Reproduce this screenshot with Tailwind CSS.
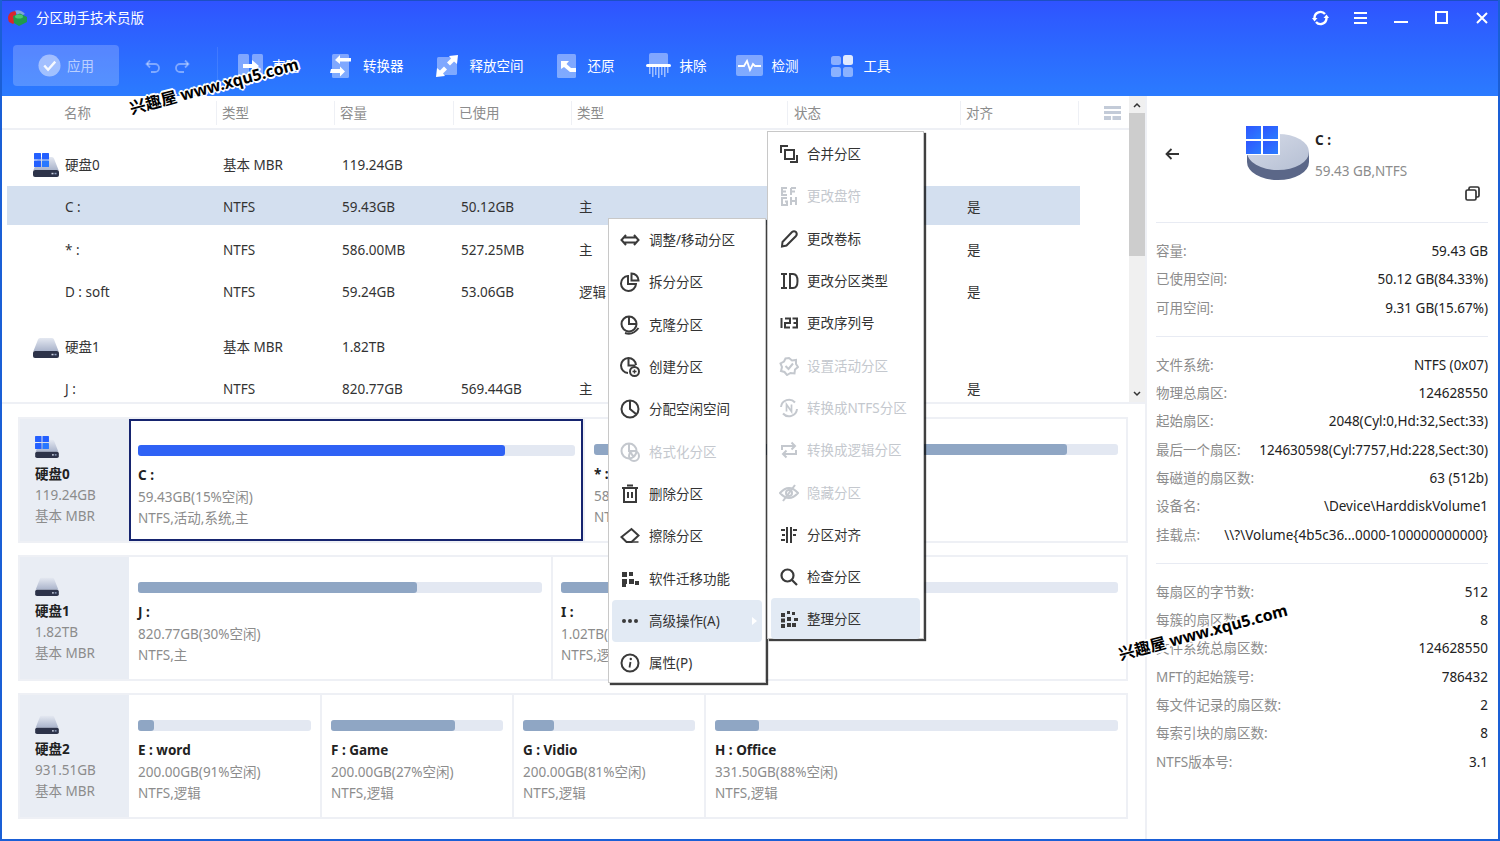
<!DOCTYPE html>
<html lang="zh-CN">
<head>
<meta charset="utf-8">
<title>分区助手技术员版</title>
<script src="https://cdn.jsdelivr.net/npm/@tailwindcss/browser@4"></script>
</head>
<body class="m-0 overflow-hidden bg-white">
<svg class="absolute w-0 h-0" aria-hidden="true">
  <defs>
    <linearGradient id="dt" x1="0" y1="0" x2="0" y2="1"><stop offset="0" stop-color="#e4e8f1"/><stop offset="1" stop-color="#aab4cb"/></linearGradient>
    <linearGradient id="pie" x1="0" y1="0" x2="1" y2="1"><stop offset="0" stop-color="#d6dbe8"/><stop offset="1" stop-color="#b5bfd3"/></linearGradient>
    <linearGradient id="win" x1="0" y1="0" x2="1" y2="1"><stop offset="0" stop-color="#2f55ff"/><stop offset="1" stop-color="#2a7dff"/></linearGradient>
    <symbol id="disk" viewBox="0 0 26 22">
      <path d="M5 3.5 Q5.500 2 7 2 L19 2 Q20.500 2 21 3.500 L25.500 15 L.5 15 Z" fill="url(#dt)"/>
      <path d="M2 15 L24 15 Q26 15 26 17 L26 20 Q26 22 24 22 L2 22 Q0 22 0 20 L0 17 Q0 15 2 15 Z" fill="#2d3349"/>
      <rect x="18.500" y="17.800" width="2" height="1.500" fill="#cfd6e6"/><rect x="21.500" y="17.800" width="2" height="1.500" fill="#8fa0c0"/>
    </symbol>
    <symbol id="wins" viewBox="0 0 15 14">
      <rect x="0" y="0" width="7" height="6.500" rx=".6" fill="#2460ff"/><rect x="8" y="0" width="7" height="6.500" rx=".6" fill="#2460ff"/>
      <rect x="0" y="7.500" width="7" height="6.500" rx=".6" fill="#2460ff"/><rect x="8" y="7.500" width="7" height="6.500" rx=".6" fill="#2878ff"/>
    </symbol>
  </defs>
</svg>

<div class="relative w-[1500px] h-[841px] flex flex-col overflow-hidden border-x-2 border-b-2 border-[#1a5fd6] font-['Noto_Sans','Noto_Sans_CJK_SC',sans-serif] text-[13.5px] leading-5 text-[#333] box-border">

  <!-- Header -->
  <header class="h-[96px] shrink-0 bg-linear-to-b from-[#2f53ff] to-[#2b7bff] text-white flex flex-col border-t border-[#1c4fc4] -mx-[2px] px-[2px]">
    <div class="h-[33px] flex items-center justify-between pl-[5px] pr-[10px]">
      <div class="flex items-center gap-[8px]">
        <svg width="21" height="18" viewBox="0 0 21 18">
          <path d="M1 8 Q2 2 9 2 L9 8 L11 11 L6 15 L2 13 Q1 11 1 8 Z" fill="#d8262c"/>
          <path d="M8 1.500 Q14 0 18 5 L11 8 Z" fill="#7ea5d8"/>
          <path d="M6 7 L13 4.500 L20 8 L20 13 L12 17 L7 14 Z" fill="#1f9a4d"/>
          <ellipse cx="12" cy="7.500" rx="4" ry="2" fill="#49c66f"/>
        </svg>
        <span>分区助手技术员版</span>
      </div>
      <div class="flex items-center gap-[24px]">
        <svg width="19" height="16" viewBox="0 0 19 16" fill="none" stroke="#fff" stroke-width="2.400"><path d="M3.500 8 A6 6 0 0 1 14 4"/><path d="M15.500 8 A6 6 0 0 1 5 12"/><path d="M1 7 L6.500 7 L3.500 10.500 Z" fill="#fff" stroke="none" transform="translate(0 1)"/><path d="M12.500 8 L18 8 L15.500 4.500 Z" fill="#fff" stroke="none"/></svg>
        <svg width="13" height="12" viewBox="0 0 13 12" fill="#fff"><rect width="13" height="2"/><rect y="5" width="13" height="2"/><rect y="10" width="13" height="2"/></svg>
        <svg width="14" height="12" viewBox="0 0 14 12" fill="#fff" class="ml-[3px]"><rect y="9" width="14" height="2"/></svg>
        <svg width="13" height="13" viewBox="0 0 13 13" fill="none" stroke="#fff" stroke-width="2" class="ml-[3px]"><rect x="1" y="1" width="11" height="11"/></svg>
        <svg width="12" height="12" viewBox="0 0 12 12" fill="none" stroke="#fff" stroke-width="2" class="ml-[4px]"><path d="M1 1 L11 11 M11 1 L1 11"/></svg>
      </div>
    </div>
    <div class="h-[41px] mt-[11px] flex items-center pl-[11px]">
      <button class="w-[106px] h-[41px] rounded-[4px] bg-white/20 flex items-center justify-center gap-[6px] text-white/60">
        <svg width="23" height="23" viewBox="0 0 24 24"><circle cx="12" cy="12" r="11.500" fill="#fff" fill-opacity=".45"/><path d="M6.500 12 L10.500 16.500 L18 8" fill="none" stroke="#fff" stroke-opacity=".9" stroke-width="2.500"/></svg>
        <span>应用</span>
      </button>
      <svg width="16" height="14" viewBox="0 0 16 14" fill="none" stroke="#fff" stroke-opacity=".4" stroke-width="1.800" class="ml-[26px]"><path d="M5 1.500 L1.500 5 L5 8.500"/><path d="M2 5 L10 5 A4 4 0 0 1 10 13 L6 13"/></svg>
      <svg width="16" height="14" viewBox="0 0 16 14" fill="none" stroke="#fff" stroke-opacity=".4" stroke-width="1.800" class="ml-[13px]"><path d="M11 1.500 L14.500 5 L11 8.500"/><path d="M14 5 L6 5 A4 4 0 0 0 6 13 L10 13"/></svg>
      <div class="w-px h-[38px] bg-white/10 ml-[27px]"></div>

      <div class="flex items-center gap-[9px] ml-[20px]">
        <svg width="25" height="24" viewBox="0 0 25 24"><rect x="0" y="0" width="11" height="24" rx="1.500" fill="#fff" fill-opacity=".4"/><rect x="14" y="0" width="11" height="24" rx="1.500" fill="#fff" fill-opacity=".4"/><path d="M5 10 L14 10 L14 6 L21 12 L14 18 L14 14 L5 14 Z" fill="#fff"/></svg>
        <span class="w-[56px] text-white">克隆</span>
      </div>
      <div class="flex items-center gap-[11px] ml-[2px]">
        <svg width="22" height="24" viewBox="0 0 22 24"><rect x="2" y="0" width="17" height="24" rx="1.500" fill="#fff" fill-opacity=".4"/><path d="M19 4 L10 4 L10 1 L5 6 L10 10 L10 7.500 L21 7.500 L21 4 Z" fill="#fff"/><path d="M1 15 L10 15 L10 12.500 L15 17.500 L10 22.500 L10 19 L0 19 Z" fill="#fff"/></svg>
        <span class="text-white">转换器</span>
      </div>
      <div class="flex items-center gap-[11px] ml-[31px]">
        <svg width="24" height="22" viewBox="0 0 24 22"><rect x="2" y="2" width="20" height="18" rx="1.500" fill="#fff" fill-opacity=".4"/><path d="M14 1 L23 0 L22 9 L19 6.500 L15 10.500 L12 7.500 L16 3.500 Z" fill="#fff"/><path d="M10 21 L1 22 L2 13 L5 15.500 L9 11.500 L12 14.500 L8 18.500 Z" fill="#fff"/></svg>
        <span class="text-white">释放空间</span>
      </div>
      <div class="flex items-center gap-[9px] ml-[33px]">
        <svg width="22" height="24" viewBox="0 0 22 24"><rect x="0" y="0" width="19" height="24" rx="1.500" fill="#fff" fill-opacity=".4"/><path d="M4 7 L12 7 L9.500 10 L14 14 L19 14 L19 18 L13 18 L7 13 L4 15 Z" fill="#fff"/></svg>
        <span class="text-white">还原</span>
      </div>
      <div class="flex items-center gap-[9px] ml-[31px]">
        <svg width="25" height="25" viewBox="0 0 25 25"><path d="M3 11 L3 2 Q3 0 5 0 L20 0 Q22 0 22 2 L22 11 Z" fill="#fff" fill-opacity=".4"/><rect x="0" y="11" width="25" height="3" rx="1.500" fill="#fff"/><g fill="#fff" fill-opacity=".55"><rect x="3" y="14" width="1.500" height="7"/><rect x="6" y="14" width="1.500" height="10"/><rect x="9" y="14" width="1.500" height="8"/><rect x="12" y="14" width="1.500" height="11"/><rect x="15" y="14" width="1.500" height="8"/><rect x="18" y="14" width="1.500" height="10"/><rect x="21" y="14" width="1.500" height="6"/></g></svg>
        <span class="text-white">抹除</span>
      </div>
      <div class="flex items-center gap-[9px] ml-[29px]">
        <svg width="27" height="21" viewBox="0 0 27 21"><rect width="27" height="21" rx="2" fill="#fff" fill-opacity=".4"/><path d="M2 11 L8 11 L11 6 L14 15 L17 9 L19 11 L25 11" fill="none" stroke="#fff" stroke-width="1.800"/></svg>
        <span class="text-white">检测</span>
      </div>
      <div class="flex items-center gap-[11px] ml-[32px]">
        <svg width="22" height="22" viewBox="0 0 22 22"><rect x="0" y="1" width="10" height="9" rx="2.500" fill="#fff" fill-opacity=".45"/><rect x="12" y="0" width="10" height="10" rx="2.500" fill="#fff" fill-opacity=".85"/><rect x="0" y="12" width="10" height="10" rx="2.500" fill="#fff" fill-opacity=".45"/><rect x="12" y="12" width="10" height="10" rx="2.500" fill="#fff" fill-opacity=".45"/></svg>
        <span class="text-white">工具</span>
      </div>
    </div>
  </header>

  <!-- Body -->
  <div class="flex-1 flex min-h-0">
    <main class="w-[1143px] shrink-0 flex flex-col">
      <!-- Table + scrollbar -->
      <div class="h-[308px] flex border-b-2 border-[#eef0f5]">
        <div class="w-[1127px] shrink-0 flex flex-col">
          <div class="h-[33px] shrink-0 grid grid-cols-[214px_118px_119px_118px_216px_173px_118px_1fr] items-center border-b-2 border-[#eef0f5] text-[#8c8c8c] mt-px">
            <div class="pl-[62px]">名称</div>
            <div class="pl-[5px] border-l border-[#eef0f5] h-[24px] flex items-center">类型</div>
            <div class="pl-[5px] border-l border-[#eef0f5] h-[24px] flex items-center">容量</div>
            <div class="pl-[5px] border-l border-[#eef0f5] h-[24px] flex items-center">已使用</div>
            <div class="pl-[5px] border-l border-[#eef0f5] h-[24px] flex items-center">类型</div>
            <div class="pl-[6px] border-l border-[#eef0f5] h-[24px] flex items-center">状态</div>
            <div class="pl-[5px] border-l border-[#eef0f5] h-[24px] flex items-center">对齐</div>
            <div class="border-l border-[#eef0f5] h-[24px] flex items-center justify-end pr-[8px]">
              <svg width="17" height="14" viewBox="0 0 17 14" fill="#c3cbd8"><rect width="17" height="3"/><rect y="5" width="17" height="3"/><rect y="10" width="7" height="4"/><rect x="8.500" y="10" width="8.500" height="4"/></svg>
            </div>
          </div>
          <div class="pt-[14px] pl-[5px] w-[1078px]">
            <div class="h-[39px] mb-[3px] grid grid-cols-[216px_119px_119px_118px_215px_173px_1fr] items-center translate-y-px">
              <div class="flex items-center pl-[26px] gap-[6px]"><span class="relative block w-[26px] h-[22px]"><svg class="absolute left-0 top-[1px] w-[26px] h-[22px]"><use href="#disk"/></svg><svg class="absolute left-[1px] -top-[1px] w-[15px] h-[14px]"><use href="#wins"/></svg></span>硬盘0</div>
              <div>基本 MBR</div><div>119.24GB</div><div></div><div></div><div></div><div></div>
            </div>
            <div class="h-[39px] mb-[4.300px] pt-[2px] grid grid-cols-[216px_119px_119px_118px_215px_173px_1fr] items-center bg-[#d3dfef]">
              <div class="pl-[58px]">C :</div><div>NTFS</div><div>59.43GB</div><div>50.12GB</div><div>主</div><div></div><div>是</div>
            </div>
            <div class="h-[39px] mb-[3.300px] pt-[2px] grid grid-cols-[216px_119px_119px_118px_215px_173px_1fr] items-center">
              <div class="pl-[58px]">* :</div><div>NTFS</div><div>586.00MB</div><div>527.25MB</div><div>主</div><div></div><div>是</div>
            </div>
            <div class="h-[39px] mb-[16px] pt-[2px] grid grid-cols-[216px_119px_119px_118px_215px_173px_1fr] items-center">
              <div class="pl-[58px]">D : soft</div><div>NTFS</div><div>59.24GB</div><div>53.06GB</div><div>逻辑</div><div></div><div>是</div>
            </div>
            <div class="h-[39px] mb-[3px] pt-[2px] grid grid-cols-[216px_119px_119px_118px_215px_173px_1fr] items-center">
              <div class="flex items-center pl-[26px] gap-[6px]"><svg class="w-[26px] h-[22px]"><use href="#disk"/></svg>硬盘1</div>
              <div>基本 MBR</div><div>1.82TB</div><div></div><div></div><div></div><div></div>
            </div>
            <div class="h-[39px] pt-[2px] grid grid-cols-[216px_119px_119px_118px_215px_173px_1fr] items-center">
              <div class="pl-[58px]">J :</div><div>NTFS</div><div>820.77GB</div><div>569.44GB</div><div>主</div><div></div><div>是</div>
            </div>
          </div>
        </div>
        <div class="w-[16px] shrink-0 bg-[#f0f0f0] flex flex-col items-center">
          <svg class="mt-[6px] mb-[5px] shrink-0" width="8" height="6" viewBox="0 0 8 6" fill="none" stroke="#333" stroke-width="1.500"><path d="M1 5 L4 2 L7 5"/></svg>
          <div class="w-full h-[143px] bg-[#cdcdcd]"></div>
          <svg class="mt-auto mb-[5px]" width="8" height="6" viewBox="0 0 8 6" fill="none" stroke="#333" stroke-width="1.500"><path d="M1 1 L4 4 L7 1"/></svg>
        </div>
      </div>

      <!-- Disk panels -->
      <div class="pl-[16px] pr-[17px] pt-[13px] flex flex-col gap-[12px]">
        <section class="h-[126px] flex border-2 border-[#eef0f5] bg-[#eef0f5] gap-[2px]">
          <div class="w-[109px] shrink-0 bg-[#e9edf4] pl-[15px] pt-[18px] text-[#8c8c8c] leading-[21px]">
            <span class="relative block w-[26px] h-[22px]"><svg class="absolute left-0 top-[1px] w-[24px] h-[20px]"><use href="#disk"/></svg><svg class="absolute left-0 -top-[1px] w-[14px] h-[13px]"><use href="#wins"/></svg></span>
            <div class="font-bold text-[#222] mt-[5px]">硬盘0</div><div>119.24GB</div><div>基本 MBR</div>
          </div>
          <div class="w-[454px] shrink-0 bg-white border-2 border-[#16246f] -ml-[2px] pl-[7px] pr-[6px] pt-[24px] text-[#8c8c8c] leading-[21.500px]">
            <div class="h-[11px] rounded-[3px] bg-[#e3e8f2] mb-[9px]"><div class="h-full w-[84%] rounded-[3px] bg-[#2f62f5]"></div></div>
            <div class="font-bold text-[#222]">C :</div><div>59.43GB(15%空闲)</div><div>NTFS,活动,系统,主</div>
          </div>
          <div class="w-[70px] shrink-0 bg-white pl-[9px] pr-[2px] pt-[25px] text-[#8c8c8c] leading-[21.500px] whitespace-nowrap">
            <div class="h-[11px] rounded-[3px] bg-[#e3e8f2] mb-[9px]"><div class="h-full w-[80%] rounded-[3px] bg-[#8fa6c4]"></div></div>
            <div class="font-bold text-[#222]">* :</div><div>586.00MB</div><div>NTFS</div>
          </div>
          <div class="flex-1 bg-white pl-[9px] pr-[8px] pt-[25px] text-[#8c8c8c] leading-[21.500px]">
            <div class="h-[11px] rounded-[3px] bg-[#e3e8f2] mb-[9px]"><div class="h-full w-[88.700%] rounded-[3px] bg-[#8fa6c4]"></div></div>
          </div>
        </section>
        <section class="h-[126px] flex border-2 border-[#eef0f5] bg-[#eef0f5] gap-[2px]">
          <div class="w-[109px] shrink-0 bg-[#e9edf4] pl-[15px] pt-[18px] text-[#8c8c8c] leading-[21px]">
            <svg class="block w-[24px] h-[20px] mt-[1px] mb-[1px]"><use href="#disk"/></svg>
            <div class="font-bold text-[#222] mt-[5px]">硬盘1</div><div>1.82TB</div><div>基本 MBR</div>
          </div>
          <div class="w-[422px] -ml-[2px] shrink-0 bg-white pl-[9px] pr-[9px] pt-[25px] text-[#8c8c8c] leading-[21.500px]">
            <div class="h-[11px] rounded-[3px] bg-[#e3e8f2] mb-[9px]"><div class="h-full w-[69%] rounded-[3px] bg-[#8fa6c4]"></div></div>
            <div class="font-bold text-[#222]">J :</div><div>820.77GB(30%空闲)</div><div>NTFS,主</div>
          </div>
          <div class="flex-1 bg-white pl-[8px] pr-[8px] pt-[25px] text-[#8c8c8c] leading-[21.500px] whitespace-nowrap">
            <div class="h-[11px] rounded-[3px] bg-[#e3e8f2] mb-[9px]"><div class="h-full w-[12%] rounded-[3px] bg-[#8fa6c4]"></div></div>
            <div class="font-bold text-[#222]">I :</div><div>1.02TB(50%空闲)</div><div>NTFS,逻辑</div>
          </div>
        </section>
        <section class="h-[126px] flex border-2 border-[#eef0f5] bg-[#eef0f5] gap-[2px]">
          <div class="w-[109px] shrink-0 bg-[#e9edf4] pl-[15px] pt-[18px] text-[#8c8c8c] leading-[21px]">
            <svg class="block w-[24px] h-[20px] mt-[1px] mb-[1px]"><use href="#disk"/></svg>
            <div class="font-bold text-[#222] mt-[5px]">硬盘2</div><div>931.51GB</div><div>基本 MBR</div>
          </div>
          <div class="w-[191px] -ml-[2px] shrink-0 bg-white pl-[9px] pr-[9px] pt-[25px] text-[#8c8c8c] leading-[21.500px]">
            <div class="h-[11px] rounded-[3px] bg-[#e3e8f2] mb-[9px]"><div class="h-full w-[9%] rounded-[3px] bg-[#8fa6c4]"></div></div>
            <div class="font-bold text-[#222]">E : word</div><div>200.00GB(91%空闲)</div><div>NTFS,逻辑</div>
          </div>
          <div class="w-[190px] shrink-0 bg-white pl-[9px] pr-[9px] pt-[25px] text-[#8c8c8c] leading-[21.500px]">
            <div class="h-[11px] rounded-[3px] bg-[#e3e8f2] mb-[9px]"><div class="h-full w-[72%] rounded-[3px] bg-[#8fa6c4]"></div></div>
            <div class="font-bold text-[#222]">F : Game</div><div>200.00GB(27%空闲)</div><div>NTFS,逻辑</div>
          </div>
          <div class="w-[190px] shrink-0 bg-white pl-[9px] pr-[9px] pt-[25px] text-[#8c8c8c] leading-[21.500px]">
            <div class="h-[11px] rounded-[3px] bg-[#e3e8f2] mb-[9px]"><div class="h-full w-[18%] rounded-[3px] bg-[#8fa6c4]"></div></div>
            <div class="font-bold text-[#222]">G : Vidio</div><div>200.00GB(81%空闲)</div><div>NTFS,逻辑</div>
          </div>
          <div class="flex-1 bg-white pl-[9px] pr-[8px] pt-[25px] text-[#8c8c8c] leading-[21.500px]">
            <div class="h-[11px] rounded-[3px] bg-[#e3e8f2] mb-[9px]"><div class="h-full w-[11%] rounded-[3px] bg-[#8fa6c4]"></div></div>
            <div class="font-bold text-[#222]">H : Office</div><div>331.50GB(88%空闲)</div><div>NTFS,逻辑</div>
          </div>
        </section>
      </div>
    </main>

    <!-- Right details panel -->
    <aside class="flex-1 border-l-2 border-[#eef0f5] pl-[9px] pr-[10px] text-[#222]">
      <div class="h-[127px] flex border-b-[1.500px] border-[#e8ebf3] relative">
        <svg class="mt-[52px] ml-[9px] shrink-0" width="14" height="12" viewBox="0 0 14 12" fill="none" stroke="#333" stroke-width="1.800"><path d="M6.500 1 L1.500 6 L6.500 11 M2 6 L14 6"/></svg>
        <svg class="mt-[30px] ml-[67px] shrink-0" width="64" height="56" viewBox="0 0 64 56">
          <ellipse cx="32" cy="36" rx="31" ry="18" fill="#5b6788"/>
          <rect x="1" y="26" width="62" height="10" fill="#5b6788"/>
          <ellipse cx="32" cy="26" rx="31" ry="18" fill="url(#pie)"/>
          <rect x="-1" y="-1" width="35" height="30" fill="#fff"/>
          <rect x="0" y="0" width="15" height="13" fill="url(#win)"/><rect x="17" y="0" width="15" height="13" fill="url(#win)"/>
          <rect x="0" y="15" width="15" height="13" fill="url(#win)"/><rect x="17" y="15" width="15" height="13" fill="url(#win)"/>
        </svg>
        <div class="ml-[5px] mt-[34px] text-[#8c8c8c]">
          <div class="font-bold text-[#222] leading-5">C :</div>
          <div class="mt-[11px]">59.43 GB,NTFS</div>
        </div>
        <svg class="absolute right-[8px] top-[90px]" width="15" height="15" viewBox="0 0 15 15" fill="none" stroke="#333" stroke-width="1.700"><rect x="1" y="4" width="10" height="10" rx="1.500"/><path d="M4 4 L4 2.500 Q4 1 5.500 1 L12.500 1 Q14 1 14 2.500 L14 9.500 Q14 11 12.500 11 L11 11"/></svg>
      </div>
      <dl class="pt-[18px] pb-[18px] border-b-[1.500px] border-[#e8ebf3] flex flex-col gap-[8.330px]">
        <div class="flex justify-between h-5"><dt class="text-[#8c8c8c]">容量:</dt><dd>59.43 GB</dd></div>
        <div class="flex justify-between h-5"><dt class="text-[#8c8c8c]">已使用空间:</dt><dd>50.12 GB(84.33%)</dd></div>
        <div class="flex justify-between h-5"><dt class="text-[#8c8c8c]">可用空间:</dt><dd>9.31 GB(15.67%)</dd></div>
      </dl>
      <dl class="pt-[18px] pb-[18px] border-b-[1.500px] border-[#e8ebf3] flex flex-col gap-[8.330px]">
        <div class="flex justify-between h-5"><dt class="text-[#8c8c8c]">文件系统:</dt><dd>NTFS (0x07)</dd></div>
        <div class="flex justify-between h-5"><dt class="text-[#8c8c8c]">物理总扇区:</dt><dd>124628550</dd></div>
        <div class="flex justify-between h-5"><dt class="text-[#8c8c8c]">起始扇区:</dt><dd>2048(Cyl:0,Hd:32,Sect:33)</dd></div>
        <div class="flex justify-between h-5"><dt class="text-[#8c8c8c]">最后一个扇区:</dt><dd>124630598(Cyl:7757,Hd:228,Sect:30)</dd></div>
        <div class="flex justify-between h-5"><dt class="text-[#8c8c8c]">每磁道的扇区数:</dt><dd>63 (512b)</dd></div>
        <div class="flex justify-between h-5"><dt class="text-[#8c8c8c]">设备名:</dt><dd>\Device\HarddiskVolume1</dd></div>
        <div class="flex justify-between h-5"><dt class="text-[#8c8c8c]">挂载点:</dt><dd>\\?\Volume{4b5c36...0000-100000000000}</dd></div>
      </dl>
      <dl class="pt-[18px] flex flex-col gap-[8.330px]">
        <div class="flex justify-between h-5"><dt class="text-[#8c8c8c]">每扇区的字节数:</dt><dd>512</dd></div>
        <div class="flex justify-between h-5"><dt class="text-[#8c8c8c]">每簇的扇区数:</dt><dd>8</dd></div>
        <div class="flex justify-between h-5"><dt class="text-[#8c8c8c]">文件系统总扇区数:</dt><dd>124628550</dd></div>
        <div class="flex justify-between h-5"><dt class="text-[#8c8c8c]">MFT的起始簇号:</dt><dd>786432</dd></div>
        <div class="flex justify-between h-5"><dt class="text-[#8c8c8c]">每文件记录的扇区数:</dt><dd>2</dd></div>
        <div class="flex justify-between h-5"><dt class="text-[#8c8c8c]">每索引块的扇区数:</dt><dd>8</dd></div>
        <div class="flex justify-between h-5"><dt class="text-[#8c8c8c]">NTFS版本号:</dt><dd>3.1</dd></div>
      </dl>
    </aside>
  </div>

  <!-- Main context menu -->
  <div class="absolute left-[606px] top-[218px] w-[158px] h-[465px] bg-white border border-[#c8c8c8] shadow-[2px_2px_1px_rgba(0,0,0,0.75)] px-[3px] flex flex-col">
    <div class="h-[42.300px] shrink-0 flex items-center gap-[9px] pl-[8px]">
      <svg width="20" height="20" viewBox="0 0 20 20" fill="none" stroke="#3a3a3a" stroke-width="2"><path d="M6 5 L1.500 10 L6 15 M14 5 L18.500 10 L14 15 M4 7.500 L16 7.500 M4 12.500 L16 12.500"/></svg><span>调整/移动分区</span>
    </div>
    <div class="h-[42.300px] shrink-0 flex items-center gap-[9px] pl-[8px]">
      <svg width="20" height="20" viewBox="0 0 20 20" fill="none" stroke="#3a3a3a" stroke-width="2"><path d="M8 4 A7.500 7.500 0 1 0 16 12 L8 12 Z"/><path d="M11.500 1.500 A7 7 0 0 1 18.500 8.500 L11.500 8.500 Z"/></svg><span>拆分分区</span>
    </div>
    <div class="h-[42.300px] shrink-0 flex items-center gap-[9px] pl-[8px]">
      <svg width="20" height="20" viewBox="0 0 20 20" fill="none" stroke="#3a3a3a" stroke-width="2"><circle cx="9" cy="9" r="7.500"/><path d="M9 2 L9 9 L16 9"/><path d="M5 18 Q13 20.500 18.500 13"/></svg><span>克隆分区</span>
    </div>
    <div class="h-[42.300px] shrink-0 flex items-center gap-[9px] pl-[8px]">
      <svg width="20" height="20" viewBox="0 0 20 20" fill="none" stroke="#3a3a3a" stroke-width="2"><path d="M8 16 A7.500 7.500 0 1 1 16 8"/><path d="M8.500 1 L8.500 8.500 L15.500 8.500"/><circle cx="14.500" cy="14.500" r="4.500"/><path d="M12.500 14.500 L16.500 14.500 M14.500 12.500 L14.500 16.500" stroke-width="1.400"/></svg><span>创建分区</span>
    </div>
    <div class="h-[42.300px] shrink-0 flex items-center gap-[9px] pl-[8px]">
      <svg width="20" height="20" viewBox="0 0 20 20" fill="none" stroke="#3a3a3a" stroke-width="2"><circle cx="10" cy="10" r="8.500"/><path d="M10 2 L10 10 L16 15"/></svg><span>分配空闲空间</span>
    </div>
    <div class="h-[42.300px] shrink-0 flex items-center gap-[9px] pl-[8px] text-[#c4c8ce]">
      <svg width="20" height="20" viewBox="0 0 20 20" fill="none" stroke="#c4c8ce" stroke-width="2"><circle cx="9" cy="9" r="7.500"/><path d="M9 2 L9 9 L16 9 M9 9 L14 15"/><circle cx="14" cy="14" r="5"/></svg><span>格式化分区</span>
    </div>
    <div class="h-[42.300px] shrink-0 flex items-center gap-[9px] pl-[8px]">
      <svg width="20" height="20" viewBox="0 0 20 20" fill="none" stroke="#3a3a3a" stroke-width="2"><path d="M2 4 L18 4 M7 1.500 L13 1.500"/><path d="M4 4 L4 18 L16 18 L16 4"/><path d="M8 8 L8 14 M12 8 L12 14"/></svg><span>删除分区</span>
    </div>
    <div class="h-[42.300px] shrink-0 flex items-center gap-[9px] pl-[8px]">
      <svg width="20" height="20" viewBox="0 0 20 20" fill="none" stroke="#3a3a3a" stroke-width="2"><path d="M1.500 11 L11.500 3 L18.500 9.500 L11.500 16 L6.500 16 Z"/><path d="M6 16 L18.500 16" stroke-width="1.500"/></svg><span>擦除分区</span>
    </div>
    <div class="h-[42.300px] shrink-0 flex items-center gap-[9px] pl-[8px]">
      <svg width="20" height="20" viewBox="0 0 20 20" fill="#3a3a3a"><rect x="2" y="3" width="5" height="5"/><rect x="9" y="3" width="4" height="4"/><rect x="2" y="10" width="5" height="5"/><rect x="9" y="10" width="5" height="5"/><rect x="15" y="12" width="4" height="4"/><rect x="2" y="15" width="4" height="3"/></svg><span>软件迁移功能</span>
    </div>
    <div class="h-[42.300px] shrink-0 flex items-center gap-[9px] pl-[8px] bg-[#e2eaf4] rounded-[4px] relative">
      <svg width="20" height="20" viewBox="0 0 20 20" fill="#3a3a3a"><circle cx="4" cy="10" r="2"/><circle cx="10" cy="10" r="2"/><circle cx="16" cy="10" r="2"/></svg><span>高级操作(A)</span>
      <svg class="absolute right-[5px] top-[17px]" width="5" height="8" viewBox="0 0 5 8" fill="#fff"><path d="M0 0 L5 4 L0 8 Z"/></svg>
    </div>
    <div class="h-[42.300px] shrink-0 flex items-center gap-[9px] pl-[8px]">
      <svg width="20" height="20" viewBox="0 0 20 20" fill="none" stroke="#3a3a3a" stroke-width="2"><circle cx="10" cy="10" r="8.500"/><path d="M10.500 9 L9.500 14.500" stroke-width="1.800"/><circle cx="10.800" cy="6" r="1.200" fill="#3a3a3a" stroke="none"/></svg><span>属性(P)</span>
    </div>
  </div>

  <!-- Sub menu -->
  <div class="absolute left-[765px] top-[131px] w-[157px] h-[508px] bg-white border border-[#c8c8c8] shadow-[2px_2px_1px_rgba(0,0,0,0.75)] px-[3px] pt-[1px] flex flex-col">
    <div class="h-[42.300px] shrink-0 flex items-center gap-[8px] pl-[8px]">
      <svg width="20" height="20" viewBox="0 0 20 20" fill="none" stroke="#3a3a3a" stroke-width="2"><path d="M2 9 L2 2 L9 2"/><rect x="6" y="6" width="9" height="9"/><path d="M18 11 L18 18 L11 18"/></svg><span>合并分区</span>
    </div>
    <div class="h-[42.300px] shrink-0 flex items-center gap-[8px] pl-[8px] text-[#c4c8ce]">
      <svg width="20" height="20" viewBox="0 0 20 20" fill="none" stroke="#c4c8ce" stroke-width="2"><path d="M8 2 L3 2 L3 9 L8 9 M3 5.500 L7 5.500 M12 2 L17 2 M12 2 L12 9 M12 5.500 L16 5.500 M8 12 L3 12 L3 19 L8 19 L8 15.500 L6 15.500 M12 11 L12 19 M17 11 L17 19 M12 15 L17 15"/></svg><span>更改盘符</span>
    </div>
    <div class="h-[42.300px] shrink-0 flex items-center gap-[8px] pl-[8px]">
      <svg width="20" height="20" viewBox="0 0 20 20" fill="none" stroke="#3a3a3a" stroke-width="2"><path d="M3 17.500 L3.500 13 L13 3 Q15 1.500 17 3 Q18.500 5 17 7 L7.500 16.500 Z"/></svg><span>更改卷标</span>
    </div>
    <div class="h-[42.300px] shrink-0 flex items-center gap-[8px] pl-[8px]">
      <svg width="20" height="20" viewBox="0 0 20 20" fill="none" stroke="#3a3a3a" stroke-width="2"><path d="M2 3 L8 3 M2 17 L8 17 M5 3 L5 17"/><path d="M11 3 L14 3 Q18.500 3 18.500 10 Q18.500 17 14 17 L11 17 Z"/></svg><span>更改分区类型</span>
    </div>
    <div class="h-[42.300px] shrink-0 flex items-center gap-[8px] pl-[8px]">
      <svg width="20" height="20" viewBox="0 0 20 20" fill="none" stroke="#3a3a3a" stroke-width="2"><path d="M2.500 5 L2.500 15"/><path d="M6 5.500 L11 5.500 L11 10 L6 10 L6 14.500 L11 14.500"/><path d="M13.500 5.500 L18 5.500 L18 14.500 L13.500 14.500 M14.500 10 L18 10"/></svg><span>更改序列号</span>
    </div>
    <div class="h-[42.300px] shrink-0 flex items-center gap-[8px] pl-[8px] text-[#c4c8ce]">
      <svg width="20" height="20" viewBox="0 0 20 20" fill="none" stroke="#c4c8ce" stroke-width="2"><path d="M10 2 L13 4.500 L17 4 L17 8 L19 11 L16 13.500 L15.500 17.500 L11.500 17 L8 19 L5.500 16 L2 15 L3 11 L1.500 7.500 L5 5.500 L6.500 2.500 Z"/><path d="M6.500 10 L9.500 13 L14 7.500"/></svg><span>设置活动分区</span>
    </div>
    <div class="h-[42.300px] shrink-0 flex items-center gap-[8px] pl-[8px] text-[#c4c8ce]">
      <svg width="20" height="20" viewBox="0 0 20 20" fill="none" stroke="#c4c8ce" stroke-width="2"><path d="M2 9 A8 8 0 0 1 16 4.500 M18 11 A8 8 0 0 1 4 15.500"/><path d="M7.500 13.500 L7.500 6.500 L12.500 13.500 L12.500 6.500" stroke-width="1.700"/></svg><span>转换成NTFS分区</span>
    </div>
    <div class="h-[42.300px] shrink-0 flex items-center gap-[8px] pl-[8px] text-[#c4c8ce]">
      <svg width="20" height="20" viewBox="0 0 20 20" fill="none" stroke="#c4c8ce" stroke-width="2"><path d="M3 10 L3 6 L15 6 M12.500 2.500 L16 6 L12.500 9.500 M17 10 L17 14 L5 14 M7.500 10.500 L4 14 L7.500 17.500"/></svg><span>转换成逻辑分区</span>
    </div>
    <div class="h-[42.300px] shrink-0 flex items-center gap-[8px] pl-[8px] text-[#c4c8ce]">
      <svg width="20" height="20" viewBox="0 0 20 20" fill="none" stroke="#c4c8ce" stroke-width="2"><path d="M1 10 Q10 0 19 10 Q10 20 1 10 Z"/><circle cx="10" cy="10" r="3"/><path d="M4 18 L16 2"/></svg><span>隐藏分区</span>
    </div>
    <div class="h-[42.300px] shrink-0 flex items-center gap-[8px] pl-[8px]">
      <svg width="20" height="20" viewBox="0 0 20 20" fill="none" stroke="#3a3a3a" stroke-width="2"><path d="M8 2 L8 18 M12 2 L12 18"/><path d="M2 5 L6 5 M3 10 L6 10 M2 15 L6 15 M14 5 L18 5 M14 10 L17 10"/></svg><span>分区对齐</span>
    </div>
    <div class="h-[42.300px] shrink-0 flex items-center gap-[8px] pl-[8px]">
      <svg width="20" height="20" viewBox="0 0 20 20" fill="none" stroke="#3a3a3a" stroke-width="2.200"><circle cx="8.500" cy="8.500" r="6"/><path d="M13 13 L18 18"/></svg><span>检查分区</span>
    </div>
    <div class="h-[41px] shrink-0 flex items-center gap-[8px] pl-[8px] bg-[#e2eaf4] rounded-[4px]">
      <svg width="20" height="20" viewBox="0 0 20 20" fill="#3a3a3a"><rect x="2" y="4" width="4" height="4"/><rect x="8" y="2" width="3" height="3"/><rect x="13" y="3" width="3" height="3"/><rect x="2" y="9.500" width="4" height="4"/><rect x="8" y="8" width="4" height="4"/><rect x="15" y="9" width="4" height="3"/><rect x="2" y="15" width="4" height="4"/><rect x="8" y="14" width="4" height="4"/><rect x="13" y="14" width="4" height="4"/></svg><span>整理分区</span>
    </div>
  </div>

  <!-- Watermarks -->
  <div class="absolute left-[125px] top-[76px] -rotate-[15deg] font-bold text-[16px] leading-5 text-black whitespace-nowrap [text-shadow:1px_1px_0_#fff,-1px_-1px_0_#fff,1px_-1px_0_#fff,-1px_1px_0_#fff,2px_0_0_#fff,-2px_0_0_#fff,0_2px_0_#fff,0_-2px_0_#fff]">兴趣屋 www.xqu5.com</div>
  <div class="absolute left-[1114px] top-[622px] -rotate-[15deg] font-bold text-[16px] leading-5 text-black whitespace-nowrap [text-shadow:1px_1px_0_#fff,-1px_-1px_0_#fff,1px_-1px_0_#fff,-1px_1px_0_#fff,2px_0_0_#fff,-2px_0_0_#fff,0_2px_0_#fff,0_-2px_0_#fff]">兴趣屋 www.xqu5.com</div>
</div>
</body>
</html>
